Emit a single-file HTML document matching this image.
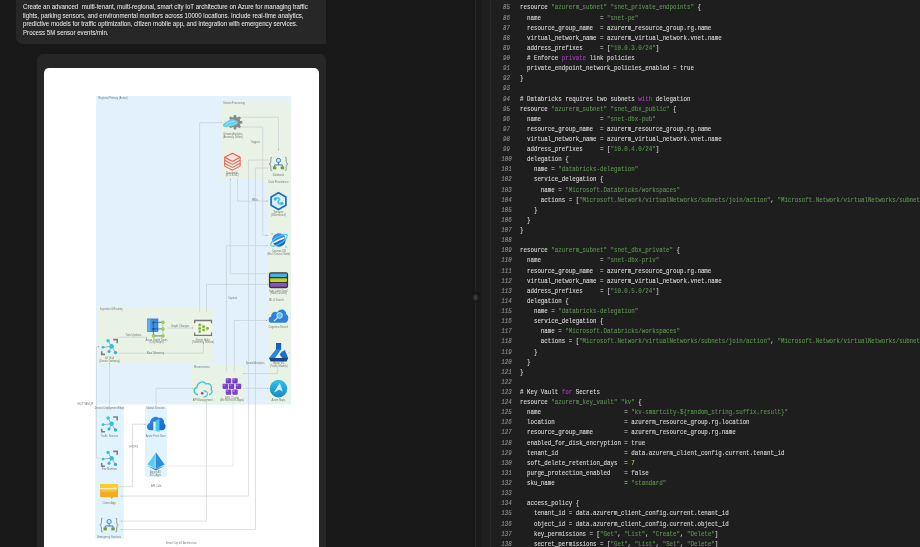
<!DOCTYPE html>
<html><head><meta charset="utf-8">
<style>
html,body{margin:0;padding:0}
body{width:920px;height:547px;overflow:hidden;background:#181818;position:relative;font-family:"Liberation Sans",sans-serif}
.abs{position:absolute}
#prompt{left:16px;top:-30px;width:310px;height:73.8px;background:#272727;border-radius:0 0 1px 7px}
#ptext{filter:blur(0.25px);left:23px;top:2.3px;width:600px;color:#ececec;font-size:12.27px;line-height:14.55px;-webkit-text-stroke:0.05px #ececec;transform:scale(0.5,0.6);transform-origin:0 0;white-space:pre}
#card{left:37px;top:53.5px;width:289px;height:520px;background:#262626;border-radius:6px}
#white{left:44px;top:68px;width:275px;height:500px;background:#fff;border-radius:5px}
#lpane{left:0;top:0;width:475px;height:547px}
#div1{left:475px;top:0;width:1px;height:547px;background:#272727}
#strip{left:476px;top:0;width:6px;height:547px;background:#1b1b1b}
#gut{left:482px;top:0;width:7.5px;height:547px;background:#1f1f1f}
#div2{left:489.5px;top:0;width:1px;height:547px;background:#282828}
#editor{left:490.5px;top:0;width:430px;height:547px;background:#1e1e1e}
#handle{left:472px;top:292px;width:8px;height:11px;background:#171717;border-radius:2px}
#hdot{left:474px;top:295px;width:3px;height:5px;background:#4c4c4c;border-radius:1px;filter:blur(0.8px)}
#code{left:0;top:0;width:1600px;transform:scale(0.5);transform-origin:0 0;filter:blur(0.5px)}
.ln{position:absolute;transform:scaleY(1.34);-webkit-text-stroke:0.25px #8c8c8c;font-size:11.6px;line-height:20.24px;left:983px;width:60px;text-align:center;font-family:"Liberation Mono",monospace;font-style:italic;color:#8c8c8c}
.cl{position:absolute;transform:scaleY(1.34);-webkit-text-stroke:0.18px;font-size:11.6px;line-height:20.24px;left:1040px;font-family:"Liberation Mono",monospace;color:#dadada;white-space:pre}
.s{color:#5c9350}
.k{color:#a63fbd}
.n{color:#d0c66a}
</style></head><body>
<div class="abs" id="prompt"></div>
<div class="abs" id="ptext">Create an advanced  multi-tenant, multi-regional, smart city IoT architecture on Azure for managing traffic
lights, parking sensors, and environmental monitors across 10000 locations. Include real-time analytics,
predictive models for traffic optimization, citizen mobile app, and integration with emergency services.
Process 5M sensor events/min.</div>
<div class="abs" id="card"></div>
<div class="abs" id="white"></div>
<!--DIAGRAM-->
<svg class="abs" style="left:0;top:0;filter:blur(0.3px)" width="920" height="547" viewBox="0 0 920 547">
<defs>
<marker id="ar" viewBox="0 0 4 4" refX="4" refY="2" markerWidth="2.4" markerHeight="2.4" orient="auto-start-reverse"><path d="M0,0.3L4,2L0,3.7z" fill="#8a8f93"/></marker>
</defs>
<g font-family="Liberation Sans" fill="#6b6b6b">
<!-- boxes -->
<rect x="96" y="96" width="195" height="308.5" fill="#e2f1fc"/>
<rect x="221.6" y="101.3" width="69" height="77.6" fill="#e8f2e5"/>
<rect x="267.2" y="179.3" width="23.4" height="224" fill="#e8f2e5"/>
<rect x="98.4" y="307" width="115.6" height="55.8" fill="#e8f2e5"/>
<rect x="191.7" y="364.9" width="52.7" height="39.5" fill="#e8f2e5"/>
<rect x="95.3" y="406.5" width="28.5" height="132.3" fill="#e1f3fc"/>
<rect x="145" y="406.5" width="21.8" height="70.5" fill="#e1f3fc"/>
</g>
<g fill="none" stroke="#c0c7cc" stroke-width="0.55">
<!-- lines -->
<path d="M199.6,311.5V122.7H222" marker-end="url(#ar)"/>
<path d="M240.4,117.3H278.5V150.4" marker-end="url(#ar)"/>
<path d="M240.4,127H262.7V235.4H267.8" marker-end="url(#ar)"/>
<path d="M120.5,496.1H248.6V160H268.6" marker-start="url(#ar)"/>
<path d="M120.5,529.6H255.4V168H268.6" marker-start="url(#ar)"/>
<path d="M268,273.8H230.3V178.5" marker-end="url(#ar)"/>
<path d="M237.5,178.5V201.1H267.8" marker-end="url(#ar)"/>
<path d="M226.4,371.5V245.7H267.8" marker-end="url(#ar)"/>
<path d="M206.5,311.5V284.4H268" marker-end="url(#ar)"/>
<path d="M234.3,371.5V320.5H267.5" marker-end="url(#ar)"/>
<path d="M277.4,366.5V373.6H243" marker-end="url(#ar)"/>
<path d="M243,388.3H268" marker-end="url(#ar)"/>
<path d="M156.1,406.5V388.3H193.5" marker-end="url(#ar)"/>
<path d="M118.5,337.2H147" marker-end="url(#ar)"/>
<path d="M118.5,353.2H203.4V343" marker-end="url(#ar)"/>
<path d="M167.6,328H193.5" marker-end="url(#ar)"/>
<path d="M109.5,406.5V363" marker-end="url(#ar)"/>
<path d="M132.4,486.7V424.2H145.5" marker-end="url(#ar)"/>
<path d="M132.4,486.7H118.5"/>
<path d="M206.4,401V521.1H120.5" marker-end="url(#ar)"/>
<path d="M233,401V466H167" stroke="#dedede"/>
<path d="M288.3,352.4H290"/>
<path d="M100.5,458.2H96.4V346.6H99.5" marker-end="url(#ar)"/>
</g>
<g font-family="Liberation Sans" font-size="2.6" fill="#777b77" text-anchor="middle">
<text x="98.2" y="99.2" text-anchor="start">Regional Primary (Active)</text>
<text x="223" y="104.2" text-anchor="start">Stream Processing</text>
<text x="233" y="135">Stream Analytics</text>
<text x="233" y="137.8">(Anomaly Detect)</text>
<text x="255.2" y="143">Triggers</text>
<text x="232.3" y="173.6">Databricks</text>
<text x="232.3" y="176.3">(ETL &amp; ML)</text>
<text x="278.4" y="176.3">Notebook</text>
<text x="278.5" y="182.8">Data Persistence</text>
<text x="255" y="201">PBI/s</text>
<text x="278.5" y="213">Synapse</text>
<text x="278.5" y="215.8">(Warehouse)</text>
<text x="278.8" y="252.2">Cosmos DB</text>
<text x="278.8" y="255">(Hot / Device State)</text>
<text x="278.5" y="291.6">Data Lake Gen2</text>
<text x="278.5" y="294.2">(Raw/Curated)</text>
<text x="269" y="300.5" text-anchor="start">ML &amp; Search</text>
<text x="232.6" y="299.2">Capture</text>
<text x="278.4" y="328">Cognitive Search</text>
<text x="278.8" y="364.4">Azure ML</text>
<text x="278.8" y="367.2">(Traffic Models)</text>
<text x="255.2" y="364">Spatial Analytics</text>
<text x="278.4" y="401">Azure Maps</text>
<text x="99.9" y="310.2" text-anchor="start">Ingestion &amp; Routing</text>
<text x="156.5" y="340.7">Azure Digital Twins</text>
<text x="156.5" y="343.4">(City Graph)</text>
<text x="203" y="340.7">Event Hubs</text>
<text x="203" y="343.4">(Telemetry Stream)</text>
<text x="180" y="327.3">Graph Changes</text>
<text x="133.4" y="336">Twin Updates</text>
<text x="155.4" y="353.5">Raw Telemetry</text>
<text x="109.5" y="359.3">IoT Hub</text>
<text x="109.5" y="362">(Device Gateway)</text>
<text x="193.9" y="367.9" text-anchor="start">Microservices</text>
<text x="202.7" y="401.1">API Management</text>
<text x="232" y="398.6">AKS Cluster</text>
<text x="232" y="401.1">(Microservices Apps)</text>
<text x="85.4" y="404.6">MQTT/AMQP</text>
<text x="109.5" y="409">Device Deployment Edge</text>
<text x="155.6" y="409">Global Services</text>
<text x="109.5" y="436.8">Traffic Sensors</text>
<text x="109.5" y="470.3">Env Monitors</text>
<text x="155.6" y="436.8">Azure Front Door</text>
<text x="155.6" y="473">Azure AD</text>
<text x="155.6" y="475.8">B2C Apps</text>
<text x="133.8" y="448.3">HTTPS</text>
<text x="156.3" y="486.5">API Calls</text>
<text x="109.1" y="503.9">Citizen App</text>
<text x="109.1" y="537.8">Emergency Services</text>
<text x="181.3" y="544.1">Smart City IoT Architecture</text>
</g>
<!-- Stream Analytics gear + cloud -->
<g transform="translate(235,122.3)">
<path transform="scale(0.86)" d="M6.18,-1.65 L8.49,-1.37 L8.49,1.37 L6.18,1.65 L5.54,3.21 L6.97,5.03 L5.03,6.97 L3.21,5.54 L1.65,6.18 L1.37,8.49 L-1.37,8.49 L-1.65,6.18 L-3.21,5.54 L-5.03,6.97 L-6.97,5.03 L-5.54,3.21 L-6.18,1.65 L-8.49,1.37 L-8.49,-1.37 L-6.18,-1.65 L-5.54,-3.21 L-6.97,-5.03 L-5.03,-6.97 L-3.21,-5.54 L-1.65,-6.18 L-1.37,-8.49 L1.37,-8.49 L1.65,-6.18 L3.21,-5.54 L5.03,-6.97 L6.97,-5.03 L5.54,-3.21z" fill="#8a8a8a"/>
<circle cx="0" cy="0" r="2.4" fill="#b0b0b0"/>
<path d="M-12,3.6C-12.4,1.4 -9.6,-0.4 -7.6,-0.8 -5.8,-3.4 -1.2,-3.6 0.6,-1.8 2.4,-1.8 3.4,-0.4 2.9,1 1.2,3.2 -3.8,4.6 -7.8,4.6 -10,4.6 -11.6,4.5 -12,3.6z" fill="#62cfe9"/>
<path d="M-9.5,2.8C-8,1 -4.5,-0.8 -0.4,-1" fill="none" stroke="#c4f0fa" stroke-width="0.8"/>
<path d="M-7.8,3.9C-5,3 -1.8,1.8 1.6,0.7" fill="none" stroke="#a8e6f5" stroke-width="0.5"/>
</g>
<!-- Databricks -->
<g transform="translate(232.4,161.5)" fill="none" stroke="#ec5b4e" stroke-width="1.05" stroke-linejoin="round">
<path d="M-7.8,-4.2L0,-8.3 7.8,-4.2 0,0z" fill="#fbe3df"/>
<path d="M-7.8,-1.2L0,2.9 7.8,-1.2"/>
<path d="M-7.8,1.8L0,5.9 7.8,1.8"/>
<path d="M-7.8,4.6L0,8.6 7.8,4.6"/>
<path d="M-7.8,-4.2V4.6M7.8,-4.2V4.6" stroke-width="0.9"/>
</g>
<!-- Logic app braces (Notebook) -->
<g id="la">
<g transform="translate(278.5,164)">
<path d="M-6.4,-6.8C-8,-6.8 -7.6,-5.4 -7.6,-3.4 -7.6,-1 -8.4,-0.3 -8.9,0 -8.4,0.3 -7.6,1 -7.6,3.4 -7.6,5.4 -8,6.8 -6.4,6.8" fill="none" stroke="#9c9c9c" stroke-width="1.05"/>
<path d="M6.4,-6.8C8,-6.8 7.6,-5.4 7.6,-3.4 7.6,-1 8.4,-0.3 8.9,0 8.4,0.3 7.6,1 7.6,3.4 7.6,5.4 8,6.8 6.4,6.8" fill="none" stroke="#9c9c9c" stroke-width="1.05"/>
<rect x="-2" y="-5.6" width="4" height="4" rx="1.6" fill="#c4e8fb" stroke="#3278c8" stroke-width="0.9"/>
<path d="M0,-1.6V0.9M-3.9,2.8V0.9H3.9V2.8" fill="none" stroke="#2b5e9e" stroke-width="0.8"/>
<rect x="-5.6" y="2.4" width="3.4" height="2.9" fill="#6c9e36"/>
<rect x="2.2" y="2.4" width="3.4" height="2.9" fill="#6c9e36"/>
</g>
</g>
<!-- Synapse hexagon -->
<g transform="translate(278.5,201.1)">
<path d="M0,-8.4L7.4,-4.2V4.2L0,8.4 -7.4,4.2V-4.2z" fill="#d6f0fa" stroke="#1f6cbf" stroke-width="1.7" stroke-linejoin="round"/>
<path d="M-3.6,-2.2C-1,-4.2 2.5,-3 0.4,-0.6 -1.6,1.6 0.6,3.6 3.6,2.2" fill="none" stroke="#55c3ea" stroke-width="1.8"/>
<circle cx="-3.4" cy="-2" r="1.5" fill="#3fb2e3"/><circle cx="3.4" cy="2.1" r="1.5" fill="#3fb2e3"/>
</g>
<!-- Cosmos -->
<g transform="translate(279,240.2)">
<circle cx="0" cy="0" r="6.6" fill="#1f67cc"/>
<path d="M-6.6,0C-6.6,-4 -3.5,-6.6 0,-6.6 3,-6.6 5,-5 6,-3 3,-2.5 0,0 -2,2.5 -4,2 -6,1.2 -6.6,0z" fill="#3a8ee6"/>
<path d="M-5.8,2.6C-2.5,0.5 1,-1 5.5,-2.5" fill="none" stroke="#ffffff" stroke-width="1.5"/>
<ellipse cx="0" cy="0" rx="9.6" ry="3.4" transform="rotate(-32)" fill="none" stroke="#4cc9ee" stroke-width="1.2"/>
<circle cx="-6.8" cy="-6.4" r="0.9" fill="#6ad4f0"/><circle cx="7" cy="6.8" r="0.9" fill="#6ad4f0"/>
</g>
<!-- Data lake -->
<g transform="translate(278.5,280.2)">
<rect x="-9.6" y="-8" width="19.2" height="16" rx="2.2" fill="#33363b"/>
<rect x="-8.4" y="-6.8" width="16.8" height="3.6" rx="0.8" fill="#48b0e0"/>
<rect x="-8.4" y="-2" width="16.8" height="3.8" rx="0.8" fill="#c2d52d"/>
<rect x="-8.4" y="2.8" width="16.8" height="3.8" rx="0.8" fill="#8c52b8"/>
<path d="M-7,-1 l1,-0.8 1,0.8 1,-0.8 1,0.8 1,-0.8 1,0.8 1,-0.8 1,0.8 1,-0.8 1,0.8 1,-0.8 1,0.8 1,-0.8" fill="none" stroke="#7a8a10" stroke-width="0.4"/>
</g>
<!-- Cognitive search cloud -->
<g transform="translate(278.2,315.8)">
<path d="M-6.6,7C-10.2,7 -10.8,1.4 -7,0.6 -7,-3.4 -3.2,-5 -0.8,-3.2 0.6,-7.6 8,-7.6 8.2,-1.2 11,-0.6 10.6,7 7.2,7z" fill="#2a82dc"/>
<circle cx="1.4" cy="-0.4" r="2.8" fill="#6fb6ee" stroke="#d6ebfb" stroke-width="0.9"/>
<path d="M-0.6,1.8L-4.2,5.4" stroke="#d6ebfb" stroke-width="1.2"/>
</g>
<!-- Azure ML flask -->
<g transform="translate(278.6,352.3)">
<rect x="-2.6" y="-9.3" width="5.2" height="7" fill="#1a62b8"/>
<path d="M-2.6,-3L2.6,-3 -3.6,5.6 -9.6,5.6z" fill="#2b86d6"/>
<path d="M3.2,-0.6L6.2,-2.4 9.6,5.6 3.6,5.6 1,2.2z" fill="#1f6fc4"/>
<path d="M-9.6,5.6H9.6L8,9.2H-8z" fill="#17468e"/>
</g>
<!-- Azure Maps -->
<defs><linearGradient id="gmap" x1="0" y1="0" x2="0" y2="1"><stop offset="0" stop-color="#35c0e8"/><stop offset="1" stop-color="#1789c4"/></linearGradient></defs>
<g transform="translate(278.5,388.6)">
<circle r="8.8" fill="url(#gmap)"/>
<path d="M1.4,-5.6L4.2,3 0.4,1 -4.4,3.8z" fill="#bfeefb"/>
<path d="M1.4,-5.6L0.4,1 -4.4,3.8z" fill="#e2f7fd" opacity="0.8"/>
</g>
<!-- Digital twins -->
<g>
<rect x="147.7" y="318.9" width="10.3" height="12.7" fill="#3a8fe0" stroke="#1f66b8" stroke-width="0.5"/>
<rect x="148" y="319.2" width="2.4" height="12.1" fill="#63aeee"/>
<path d="M153.3,322.3V335.9H162.9M153.3,322.3H162.9M153.3,328.9H162.9" fill="none" stroke="#1d4f92" stroke-width="0.7"/>
<path d="M162.9,322.3V335.9" fill="none" stroke="#7cc4ea" stroke-width="0.6"/>
<circle cx="153.3" cy="322.3" r="0.9" fill="#173f7a"/><circle cx="153.3" cy="328.9" r="0.9" fill="#173f7a"/>
<circle cx="162.9" cy="322.3" r="1.5" fill="#a9d64a" stroke="#7aae2a" stroke-width="0.4"/>
<circle cx="162.9" cy="328.9" r="1.5" fill="#a9d64a" stroke="#7aae2a" stroke-width="0.4"/>
<circle cx="153.7" cy="335.9" r="1.5" fill="#a9d64a" stroke="#7aae2a" stroke-width="0.4"/>
<circle cx="162.9" cy="335.9" r="1.5" fill="#a9d64a" stroke="#7aae2a" stroke-width="0.4"/>
</g>
<!-- Event hubs brackets + green dots -->
<g transform="translate(203.1,327.9)">
<rect x="-8.2" y="-7" width="16.4" height="14" fill="#f1f6ee"/>
<path d="M-8.4,-4.6V-7.4H8.4V-4.6M-8.4,4.6V7.4H8.4V4.6" fill="none" stroke="#7a7a7a" stroke-width="1.3"/>
<g fill="#d4f0a0" opacity="0.7"><circle cx="-2" cy="-1" r="3.2"/><circle cx="2" cy="1" r="3"/></g>
<g fill="#7fb03a"><circle cx="-3.4" cy="-3.1" r="1.35"/><circle cx="-3.4" cy="0.7" r="1.35"/><circle cx="-3.4" cy="3.8" r="1.35"/><circle cx="0.5" cy="-1.2" r="1.35"/><circle cx="0.5" cy="2.1" r="1.35"/><circle cx="4.5" cy="0.5" r="1.35"/></g>
</g>
<!-- IoT hub icon def -->
<g id="iot" transform="translate(109.5,346.4)">
<path d="M3.6,-6.8H7.7V-3.2" fill="none" stroke="#7f8080" stroke-width="1.6"/>
<path d="M-7.8,4.9V8H-4.5" fill="none" stroke="#7f8080" stroke-width="1.6"/>
<path d="M2.1,0L-1.4,-5.7M2.1,0L-6.5,0.9M2.1,0L-0.5,5.1M2.1,0L6,6.2" stroke="#5a9fb8" stroke-width="0.7"/>
<circle cx="2.1" cy="0" r="2.3" fill="#38bde0"/>
<circle cx="-1.4" cy="-5.7" r="1.8" fill="#3cc3e4"/>
<circle cx="-6.5" cy="0.9" r="1.4" fill="#38bde0"/>
<circle cx="-0.5" cy="5.1" r="1.5" fill="#2fb0d6"/>
<circle cx="6" cy="6.2" r="1.7" fill="#2fb0d6"/>
</g>
<use href="#iot" x="0" y="77.4"/>
<use href="#iot" x="0" y="111.8"/>
<!-- API management -->
<g transform="translate(203,388.5)">
<path d="M-5,6C-9.5,6 -10,0 -6,-1 -6,-6 0,-8.5 3,-4.5 6.5,-6 9.5,-2.5 8.2,1 10,2.5 9,6 6,6" fill="none" stroke="#3dc2dd" stroke-width="1.3"/>
<path d="M0.5,2.5A3,3 0 1 1 0.5,8.2" fill="none" stroke="#3dc2dd" stroke-width="1.1"/>
<circle cx="-0.8" cy="4.8" r="1.3" fill="#9b3dc4"/>
</g>
<!-- AKS cubes -->
<g fill="#7a3fc8">
<rect x="225.8" y="378.2" width="5.4" height="5.2" rx="0.8"/><rect x="232.3" y="378.2" width="5.4" height="5.2" rx="0.8"/>
<rect x="222.6" y="383.8" width="5.4" height="5.2" rx="0.8"/><rect x="228.8" y="383.8" width="5.4" height="5.2" rx="0.8"/><rect x="235.8" y="383.8" width="5.4" height="5.2" rx="0.8"/>
<rect x="225.8" y="389.6" width="5.4" height="5.2" rx="0.8"/><rect x="232.3" y="389.6" width="5.4" height="5.2" rx="0.8"/>
</g>
<g fill="#a57ae0" opacity="0.9">
<rect x="226.6" y="378.8" width="1.8" height="1.6"/><rect x="233.1" y="378.8" width="1.8" height="1.6"/>
<rect x="223.4" y="384.4" width="1.8" height="1.6"/><rect x="229.6" y="384.4" width="1.8" height="1.6"/><rect x="236.6" y="384.4" width="1.8" height="1.6"/>
<rect x="226.6" y="390.2" width="1.8" height="1.6"/><rect x="233.1" y="390.2" width="1.8" height="1.6"/>
</g>
<!-- Front door cloud -->
<defs><linearGradient id="gfd" x1="0" y1="0" x2="1" y2="1"><stop offset="0" stop-color="#3b8cf0"/><stop offset="1" stop-color="#1664c4"/></linearGradient></defs>
<g transform="translate(156,423.3)">
<path d="M-5.6,7C-9.6,7 -10.4,0.6 -6,-0.6 -5.6,-5.6 -0.6,-8.4 3,-5.4 6.2,-6.4 8.6,-3.4 8,0 10.6,1.2 10,7 6.2,7z" fill="url(#gfd)"/>
<rect x="-2.7" y="-1.6" width="2.5" height="8.7" fill="#e8f6fc"/>
<path d="M-0.2,-2.8L3.4,-4.4V8.8L-0.2,7.4z" fill="#45c8ee"/>
</g>
<!-- AD B2C pyramid -->
<g transform="translate(156,461)">
<path d="M-9.2,4.6L0,9.6 9.2,4.6 0,8z" fill="#2a86cc"/>
<path d="M0,-8.6L-8.6,3.6 0,8z" fill="#5cc8f0"/>
<path d="M0,-8.6L8.6,3.6 0,8z" fill="#2f90d8"/>
<path d="M0,-8.6L-3,5 0,8z" fill="#86d8f6" opacity="0.7"/>
</g>
<!-- Citizen app -->
<g transform="translate(109.1,490.6)">
<rect x="-9" y="-6.6" width="18" height="13.2" rx="0.8" fill="#f2ad1c"/>
<rect x="-9" y="-6.6" width="18" height="6" rx="0.8" fill="#f8cb2e"/>
<path d="M-9,-1.8H6.8L5.2,-3.4" fill="none" stroke="#fff6d8" stroke-width="1.1"/>
<path d="M-7.5,0.4H7" stroke="#fde2a0" stroke-width="0.6"/>
<path d="M1.2,6.5L2.6,8.4 4,6.5z" fill="#eea418"/>
</g>
<use href="#la" x="-169.4" y="361.1"/>

</svg>
<!--/DIAGRAM-->
<div class="abs" id="div1"></div>
<div class="abs" id="strip"></div>
<div class="abs" id="gut"></div>
<div class="abs" id="div2"></div>
<div class="abs" id="editor"></div>
<div class="abs" id="handle"></div>
<div class="abs" id="hdot"></div>
<div class="abs" id="code">
<!--CODE-->
<div class="ln" style="top:5.40px">85</div><div class="cl" style="top:5.40px">resource <span class="s">&quot;azurerm_subnet&quot;</span> <span class="s">&quot;snet_private_endpoints&quot;</span> {</div>
<div class="ln" style="top:25.64px">86</div><div class="cl" style="top:25.64px">  name                 = <span class="s">&quot;snet-pe&quot;</span></div>
<div class="ln" style="top:45.88px">87</div><div class="cl" style="top:45.88px">  resource_group_name  = azurerm_resource_group.rg.name</div>
<div class="ln" style="top:66.12px">88</div><div class="cl" style="top:66.12px">  virtual_network_name = azurerm_virtual_network.vnet.name</div>
<div class="ln" style="top:86.36px">89</div><div class="cl" style="top:86.36px">  address_prefixes     = [<span class="s">&quot;10.0.3.0/24&quot;</span>]</div>
<div class="ln" style="top:106.60px">90</div><div class="cl" style="top:106.60px">  # Enforce <span class="k">private</span> link policies</div>
<div class="ln" style="top:126.84px">91</div><div class="cl" style="top:126.84px">  private_endpoint_network_policies_enabled = true</div>
<div class="ln" style="top:147.08px">92</div><div class="cl" style="top:147.08px">}</div>
<div class="ln" style="top:167.32px">93</div><div class="cl" style="top:167.32px"></div>
<div class="ln" style="top:187.56px">94</div><div class="cl" style="top:187.56px"># Databricks requires two subnets <span class="k">with</span> delegation</div>
<div class="ln" style="top:207.80px">95</div><div class="cl" style="top:207.80px">resource <span class="s">&quot;azurerm_subnet&quot;</span> <span class="s">&quot;snet_dbx_public&quot;</span> {</div>
<div class="ln" style="top:228.04px">96</div><div class="cl" style="top:228.04px">  name                 = <span class="s">&quot;snet-dbx-pub&quot;</span></div>
<div class="ln" style="top:248.28px">97</div><div class="cl" style="top:248.28px">  resource_group_name  = azurerm_resource_group.rg.name</div>
<div class="ln" style="top:268.52px">98</div><div class="cl" style="top:268.52px">  virtual_network_name = azurerm_virtual_network.vnet.name</div>
<div class="ln" style="top:288.76px">99</div><div class="cl" style="top:288.76px">  address_prefixes     = [<span class="s">&quot;10.0.4.0/24&quot;</span>]</div>
<div class="ln" style="top:309.00px">100</div><div class="cl" style="top:309.00px">  delegation {</div>
<div class="ln" style="top:329.24px">101</div><div class="cl" style="top:329.24px">    name = <span class="s">&quot;databricks-delegation&quot;</span></div>
<div class="ln" style="top:349.48px">102</div><div class="cl" style="top:349.48px">    service_delegation {</div>
<div class="ln" style="top:369.72px">103</div><div class="cl" style="top:369.72px">      name = <span class="s">&quot;Microsoft.Databricks/workspaces&quot;</span></div>
<div class="ln" style="top:389.96px">104</div><div class="cl" style="top:389.96px">      actions = [<span class="s">&quot;Microsoft.Network/virtualNetworks/subnets/join/action&quot;</span>, <span class="s">&quot;Microsoft.Network/virtualNetworks/subnets/prepareNetworkPolicies/action&quot;</span>]</div>
<div class="ln" style="top:410.20px">105</div><div class="cl" style="top:410.20px">    }</div>
<div class="ln" style="top:430.44px">106</div><div class="cl" style="top:430.44px">  }</div>
<div class="ln" style="top:450.68px">107</div><div class="cl" style="top:450.68px">}</div>
<div class="ln" style="top:470.92px">108</div><div class="cl" style="top:470.92px"></div>
<div class="ln" style="top:491.16px">109</div><div class="cl" style="top:491.16px">resource <span class="s">&quot;azurerm_subnet&quot;</span> <span class="s">&quot;snet_dbx_private&quot;</span> {</div>
<div class="ln" style="top:511.40px">110</div><div class="cl" style="top:511.40px">  name                 = <span class="s">&quot;snet-dbx-priv&quot;</span></div>
<div class="ln" style="top:531.64px">111</div><div class="cl" style="top:531.64px">  resource_group_name  = azurerm_resource_group.rg.name</div>
<div class="ln" style="top:551.88px">112</div><div class="cl" style="top:551.88px">  virtual_network_name = azurerm_virtual_network.vnet.name</div>
<div class="ln" style="top:572.12px">113</div><div class="cl" style="top:572.12px">  address_prefixes     = [<span class="s">&quot;10.0.5.0/24&quot;</span>]</div>
<div class="ln" style="top:592.36px">114</div><div class="cl" style="top:592.36px">  delegation {</div>
<div class="ln" style="top:612.60px">115</div><div class="cl" style="top:612.60px">    name = <span class="s">&quot;databricks-delegation&quot;</span></div>
<div class="ln" style="top:632.84px">116</div><div class="cl" style="top:632.84px">    service_delegation {</div>
<div class="ln" style="top:653.08px">117</div><div class="cl" style="top:653.08px">      name = <span class="s">&quot;Microsoft.Databricks/workspaces&quot;</span></div>
<div class="ln" style="top:673.32px">118</div><div class="cl" style="top:673.32px">      actions = [<span class="s">&quot;Microsoft.Network/virtualNetworks/subnets/join/action&quot;</span>, <span class="s">&quot;Microsoft.Network/virtualNetworks/subnets/prepareNetworkPolicies/action&quot;</span>]</div>
<div class="ln" style="top:693.56px">119</div><div class="cl" style="top:693.56px">    }</div>
<div class="ln" style="top:713.80px">120</div><div class="cl" style="top:713.80px">  }</div>
<div class="ln" style="top:734.04px">121</div><div class="cl" style="top:734.04px">}</div>
<div class="ln" style="top:754.28px">122</div><div class="cl" style="top:754.28px"></div>
<div class="ln" style="top:774.52px">123</div><div class="cl" style="top:774.52px"># Key Vault <span class="k">for</span> Secrets</div>
<div class="ln" style="top:794.76px">124</div><div class="cl" style="top:794.76px">resource <span class="s">&quot;azurerm_key_vault&quot;</span> <span class="s">&quot;kv&quot;</span> {</div>
<div class="ln" style="top:815.00px">125</div><div class="cl" style="top:815.00px">  name                        = <span class="s">&quot;kv-smartcity-${random_string.suffix.result}&quot;</span></div>
<div class="ln" style="top:835.24px">126</div><div class="cl" style="top:835.24px">  location                    = azurerm_resource_group.rg.location</div>
<div class="ln" style="top:855.48px">127</div><div class="cl" style="top:855.48px">  resource_group_name         = azurerm_resource_group.rg.name</div>
<div class="ln" style="top:875.72px">128</div><div class="cl" style="top:875.72px">  enabled_for_disk_encryption = true</div>
<div class="ln" style="top:895.96px">129</div><div class="cl" style="top:895.96px">  tenant_id                   = data.azurerm_client_config.current.tenant_id</div>
<div class="ln" style="top:916.20px">130</div><div class="cl" style="top:916.20px">  soft_delete_retention_days  = <span class="n">7</span></div>
<div class="ln" style="top:936.44px">131</div><div class="cl" style="top:936.44px">  purge_protection_enabled    = false</div>
<div class="ln" style="top:956.68px">132</div><div class="cl" style="top:956.68px">  sku_name                    = <span class="s">&quot;standard&quot;</span></div>
<div class="ln" style="top:976.92px">133</div><div class="cl" style="top:976.92px"></div>
<div class="ln" style="top:997.16px">134</div><div class="cl" style="top:997.16px">  access_policy {</div>
<div class="ln" style="top:1017.40px">135</div><div class="cl" style="top:1017.40px">    tenant_id = data.azurerm_client_config.current.tenant_id</div>
<div class="ln" style="top:1037.64px">136</div><div class="cl" style="top:1037.64px">    object_id = data.azurerm_client_config.current.object_id</div>
<div class="ln" style="top:1057.88px">137</div><div class="cl" style="top:1057.88px">    key_permissions = [<span class="s">&quot;Get&quot;</span>, <span class="s">&quot;List&quot;</span>, <span class="s">&quot;Create&quot;</span>, <span class="s">&quot;Delete&quot;</span>]</div>
<div class="ln" style="top:1078.12px">138</div><div class="cl" style="top:1078.12px">    secret_permissions = [<span class="s">&quot;Get&quot;</span>, <span class="s">&quot;List&quot;</span>, <span class="s">&quot;Set&quot;</span>, <span class="s">&quot;Delete&quot;</span>]</div>
<!--/CODE-->
</div>
</body></html>
